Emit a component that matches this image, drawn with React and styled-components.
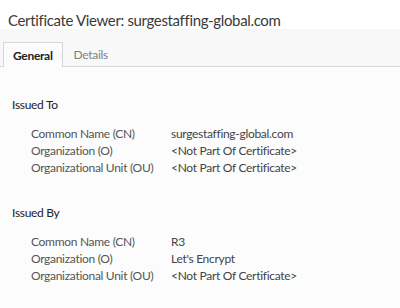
import React from 'react';
import styled, { createGlobalStyle } from 'styled-components';

const GlobalStyle = createGlobalStyle`
  body {
    margin: 0;
    background: #fcfcfc;
    font-family: Lato, "Open Sans", sans-serif;
    font-variant-ligatures: none;
  }
`;

const Window = styled.div`
  width: 400px;
  height: 308px;
  display: flex;
  flex-direction: column;
  background: #fcfcfc;
  overflow: hidden;
`;

const Header = styled.div`
  flex-shrink: 0;
  height: 29px;
  box-sizing: border-box;
  background: #ffffff;
  padding: 11px 8px 0;
  font-size: 15px;
  line-height: 18px;
  letter-spacing: -0.35px;
  color: #3a3a3a;
`;

const TabBar = styled.div`
  flex-shrink: 0;
  display: flex;
  align-items: flex-end;
  height: 38px;
  padding-left: 3px;
  background: #f8f8f8;
  border-bottom: 1px solid #d6d6d6;
  box-sizing: border-box;
`;

const Tab = styled.div`
  height: ${({ active }) => (active ? '25px' : '24px')};
  margin-bottom: ${({ active }) => (active ? '-1px' : '0')};
  padding: 0 ${({ active }) => (active ? '9px' : '10px')};
  display: flex;
  align-items: center;
  font-size: 12px;
  letter-spacing: -0.3px;
  font-weight: ${({ active }) => (active ? 700 : 400)};
  color: ${({ active }) => (active ? '#222' : '#808080')};
  background: ${({ active }) => (active ? '#fcfcfc' : 'transparent')};
  border: 1px solid ${({ active }) => (active ? '#d6d6d6' : 'transparent')};
  border-bottom: none;
  box-sizing: border-box;
`;

const Body = styled.div`
  padding: 29px 0 0 12px;
  display: flex;
  flex-direction: column;
  font-size: 12px;
  line-height: 17px;
  letter-spacing: -0.3px;
`;

const Section = styled.section`
  flex-shrink: 0;
  margin-bottom: 28px;
`;

const SectionTitle = styled.div`
  color: #222;
  margin-bottom: 12px;
`;

const Fields = styled.div`
  display: grid;
  grid-template-columns: 140px auto;
  padding-left: 19px;
`;

const Label = styled.div`
  color: #555;
`;

const Value = styled.div`
  color: #444;
`;

const sections = [
  {
    title: 'Issued To',
    rows: [
      ['Common Name (CN)', 'surgestaffing-global.com'],
      ['Organization (O)', '<Not Part Of Certificate>'],
      ['Organizational Unit (OU)', '<Not Part Of Certificate>'],
    ],
  },
  {
    title: 'Issued By',
    rows: [
      ['Common Name (CN)', 'R3'],
      ['Organization (O)', "Let's Encrypt"],
      ['Organizational Unit (OU)', '<Not Part Of Certificate>'],
    ],
  },
];

export default function App() {
  return (
    <Window>
      <GlobalStyle />
      <Header>Certificate Viewer: surgestaffing-global.com</Header>
      <TabBar>
        <Tab active>General</Tab>
        <Tab>Details</Tab>
      </TabBar>
      <Body>
        {sections.map((s) => (
          <Section key={s.title}>
            <SectionTitle>{s.title}</SectionTitle>
            <Fields>
              {s.rows.map(([k, v]) => (
                <React.Fragment key={k}>
                  <Label>{k}</Label>
                  <Value>{v}</Value>
                </React.Fragment>
              ))}
            </Fields>
          </Section>
        ))}
      </Body>
    </Window>
  );
}
